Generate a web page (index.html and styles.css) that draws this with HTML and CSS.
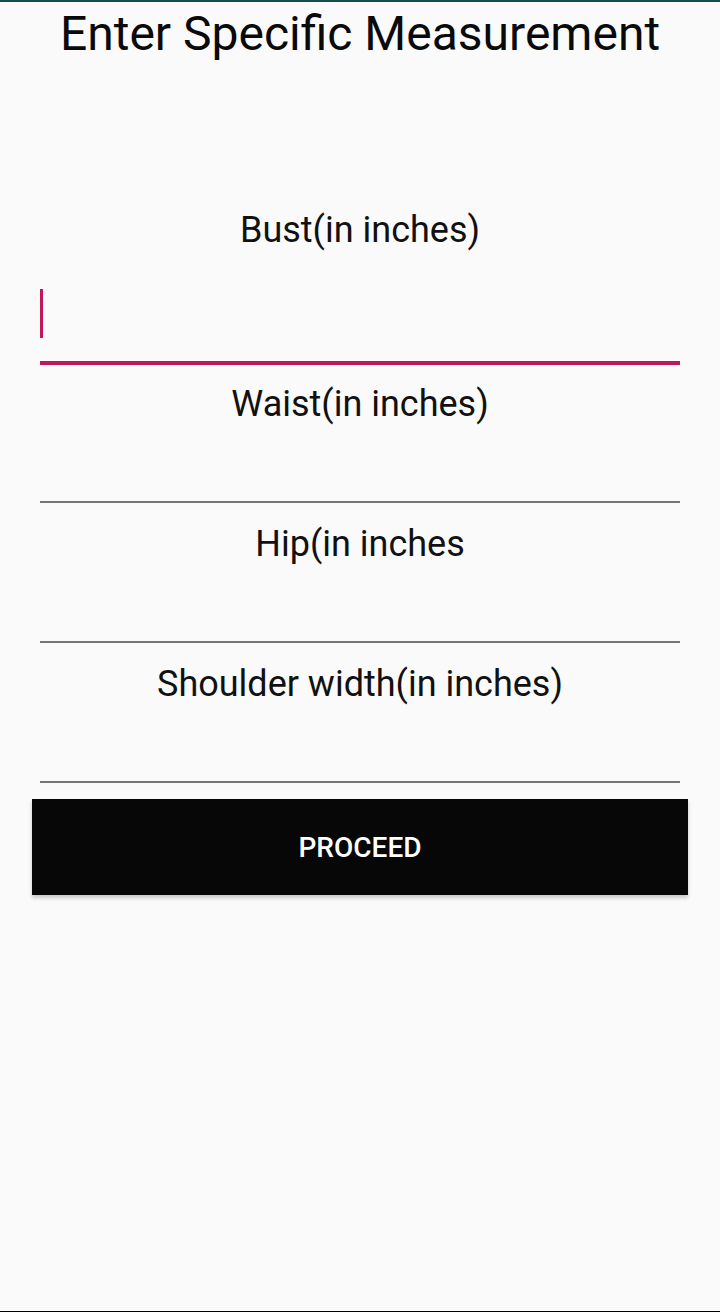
FILE: index.html
```html
<!DOCTYPE html>
<html lang="en">
<head>
<meta charset="utf-8">
<title>Enter Specific Measurement</title>
<link rel="stylesheet" href="styles.css">
</head>
<body>
<div class="screen">
  <h1 class="title">Enter Specific Measurement</h1>
  <form class="form">
    <div class="field field-first">
      <label class="label">Bust(in inches)</label>
      <div class="input input-focused"><span class="cursor"></span></div>
    </div>
    <div class="field field-after-focus">
      <label class="label">Waist(in inches)</label>
      <div class="input"></div>
    </div>
    <div class="field">
      <label class="label">Hip(in inches</label>
      <div class="input"></div>
    </div>
    <div class="field">
      <label class="label">Shoulder width(in inches)</label>
      <div class="input"></div>
    </div>
  </form>
  <div class="actions">
    <button class="btn" type="button">PROCEED</button>
  </div>
</div>
</body>
</html>
```

FILE: styles.css
```css
* { box-sizing: border-box; }
html, body {
  margin: 0;
  padding: 0;
  background: #fafafa;
}
body {
  font-family: Roboto, "Noto Sans", "Liberation Sans", sans-serif;
  color: #111;
}
.screen {
  height: 1312px;
  border-top: 2px solid #184b4d;
  border-bottom: 1px solid #000;
  display: flex;
  flex-direction: column;
}
.title {
  margin: 4px 0 0;
  font-size: 48px;
  font-weight: 400;
  line-height: 56px;
  text-align: center;
  color: #0a0a0a;
}
.form {
  display: flex;
  flex-direction: column;
  padding: 0 40px;
}
.field {
  display: flex;
  flex-direction: column;
  margin-top: 20px;
}
.field-first {
  margin-top: 147px;
}
.field-after-focus {
  margin-top: 18px;
}
.label {
  font-size: 36px;
  line-height: 42px;
  text-align: center;
  color: #111;
}
.input {
  height: 78px;
  border-bottom: 2px solid #757575;
}
.input-focused {
  height: 114px;
  border-bottom: 4px solid #c2185b;
  padding-top: 38px;
}
.cursor {
  display: block;
  width: 3px;
  height: 49px;
  background: #c2185b;
}
.actions {
  padding: 16px 32px 0;
}
.btn {
  width: 100%;
  height: 96px;
  border: none;
  border-radius: 0;
  background: #070707;
  color: #fff;
  font-family: Roboto, "Noto Sans", sans-serif;
  font-size: 28px;
  font-weight: 500;
  letter-spacing: 0;
  box-shadow: 0 3px 4px rgba(0, 0, 0, 0.2);
}
```
